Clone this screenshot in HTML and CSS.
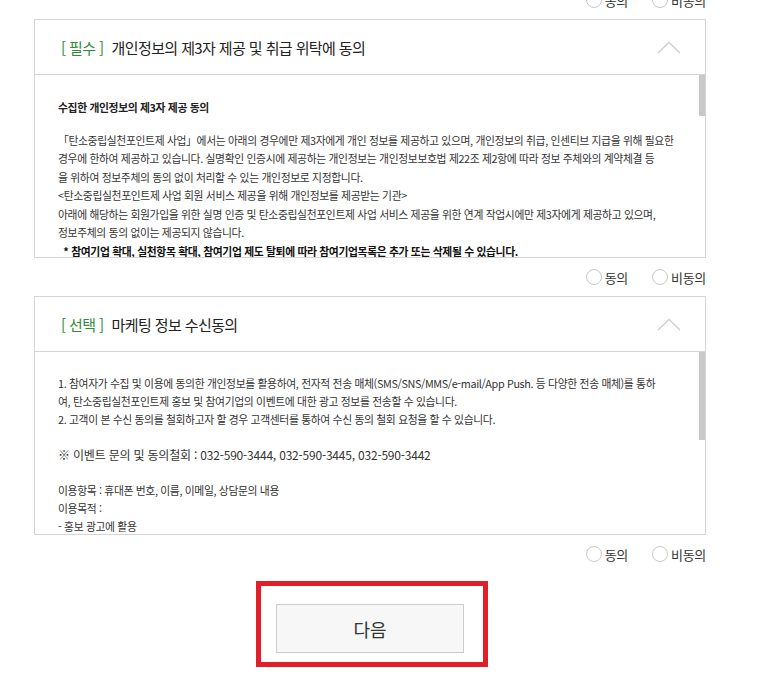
FILE: index.html
```html
<!DOCTYPE html>
<html lang="ko">
<head>
	<meta charset="utf-8">
	<title>약관 동의</title>
	<link rel="stylesheet" href="styles.css">
</head>
<body>
	<div id="agree-wrap">
		<div class="agree-radio">
			<label><span class="radio"></span>동의</label>
			<label><span class="radio"></span>비동의</label>
		</div>

		<div class="terms-box">
			<div class="terms-head">
				<p><span class="tag">[ 필수 ]</span>개인정보의 제3자 제공 및 취급 위탁에 동의</p>
				<svg class="toggle" width="24" height="13" viewBox="0 0 24 13"><polyline points="1,12 12,1.5 23,12" fill="none" stroke="#cfcfcf" stroke-width="1.4"/></svg>
			</div>
			<div class="terms-body">
				<div class="terms-text">
					<p class="terms-title">수집한 개인정보의 제3자 제공 동의</p>
					<p>
						「탄소중립실천포인트제 사업」에서는 아래의 경우에만 제3자에게 개인 정보를 제공하고 있으며, 개인정보의 취급, 인센티브 지급을 위해 필요한<br>
						경우에 한하여 제공하고 있습니다. 실명확인 인증시에 제공하는 개인정보는 개인정보보호법 제22조 제2항에 따라 정보 주체와의 계약체결 등<br>
						을 위하여 정보주체의 동의 없이 처리할 수 있는 개인정보로 지정합니다.<br>
						&lt;탄소중립실천포인트제 사업 회원 서비스 제공을 위해 개인정보를 제공받는 기관&gt;<br>
						아래에 해당하는 회원가입을 위한 실명 인증 및 탄소중립실천포인트제 사업 서비스 제공을 위한 연계 작업시에만 제3자에게 제공하고 있으며,<br>
						정보주체의 동의 없이는 제공되지 않습니다.
					</p>
					<p class="terms-note">&nbsp;&nbsp;* 참여기업 확대, 실천항목 확대, 참여기업 제도 탈퇴에 따라 참여기업목록은 추가 또는 삭제될 수 있습니다.</p>
					<p>
						1. 제공받는 자 : 한국환경공단, 참여기업<br>
						2. 제공 목적 : 회원 실명 인증, 실천 실적 확인 및 인센티브 지급
					</p>
				</div>
				<div class="scroll-bar"><span class="thumb thumb-long"></span></div>
			</div>
		</div>
		<div class="agree-radio">
			<label><span class="radio"></span>동의</label>
			<label><span class="radio"></span>비동의</label>
		</div>

		<div class="terms-box">
			<div class="terms-head">
				<p><span class="tag">[ 선택 ]</span>마케팅 정보 수신동의</p>
				<svg class="toggle" width="24" height="13" viewBox="0 0 24 13"><polyline points="1,12 12,1.5 23,12" fill="none" stroke="#cfcfcf" stroke-width="1.4"/></svg>
			</div>
			<div class="terms-body">
				<div class="terms-text marketing">
					<p>
						1. 참여자가 수집 및 이용에 동의한 개인정보를 활용하여, 전자적 전송 매체(SMS/SNS/MMS/e-mail/App Push. 등 다양한 전송 매체)를 통하<br>
						여, 탄소중립실천포인트제 홍보 및 참여기업의 이벤트에 대한 광고 정보를 전송할 수 있습니다.<br>
						2. 고객이 본 수신 동의를 철회하고자 할 경우 고객센터를 통하여 수신 동의 철회 요청을 할 수 있습니다.<br>
						<br>
						<span class="tel">※ 이벤트 문의 및 동의철회 : 032-590-3444, 032-590-3445, 032-590-3442</span><br>
						<br>
						이용항목 : 휴대폰 번호, 이름, 이메일, 상담문의 내용<br>
						이용목적 :<br>
						- 홍보 광고에 활용<br>
						- 이벤트 및 행사 안내<br>
						보유기간 : 동의 철회 시까지
					</p>
				</div>
				<div class="scroll-bar"><span class="thumb thumb-short"></span></div>
			</div>
		</div>
		<div class="agree-radio">
			<label><span class="radio"></span>동의</label>
			<label><span class="radio"></span>비동의</label>
		</div>

		<div class="btn-area">
			<div class="btn-mark">
				<button type="button" class="btn-next">다음</button>
			</div>
		</div>
	</div>
</body>
</html>
```

FILE: styles.css
```css
body {
	margin: 0;
	background: #fff;
	font-family: "Noto Sans CJK KR", "Noto Sans", sans-serif;
	color: #333;
	overflow: hidden;
}
#agree-wrap {
	width: 672px;
	margin: -19px 0 0 34px;
}
p {
	margin: 0;
}

/* 동의 / 비동의 */
.agree-radio {
	height: 38px;
	display: flex;
	justify-content: flex-end;
	align-items: center;
	gap: 24px;
}
.agree-radio label {
	display: flex;
	align-items: center;
	gap: 3px;
	font-size: 13px;
	color: #333;
	letter-spacing: -0.3px;
}
.agree-radio .radio {
	width: 14px;
	height: 14px;
	border: 1px solid #c9c9c9;
	border-radius: 50%;
	background: #fff;
}

/* 약관 박스 */
.terms-box {
	border: 1px solid #d5d5d5;
}
.terms-head {
	height: 54px;
	display: flex;
	align-items: center;
	justify-content: space-between;
	padding: 0 24px 0 26px;
	border-bottom: 1px solid #d5d5d5;
}
.terms-head p {
	font-size: 15px;
	color: #222;
	letter-spacing: -0.6px;
}
.terms-head .tag {
	color: #2f8a3c;
	margin-right: 8px;
}
.toggle {
	display: block;
	margin-top: 1px;
}
.terms-body {
	height: 182px;
	display: flex;
}
.terms-text {
	flex: 1;
	overflow: hidden;
	padding-left: 23px;
	font-size: 10.8px;
	line-height: 18.5px;
	letter-spacing: -0.35px;
	white-space: nowrap;
	color: #333;
}
.terms-text > p:first-child {
	margin-top: 23px;
}
.terms-text.marketing {
	line-height: 17.9px;
}
.terms-title {
	font-weight: bold;
	color: #222;
	margin-bottom: 14px;
}
.terms-note {
	font-weight: bold;
	color: #111;
}
.terms-text .tel {
	font-size: 12px;
	line-height: 1;
	letter-spacing: -0.2px;
}

/* 스크롤바 */
.scroll-bar {
	width: 6px;
	background: #fff;
}
.scroll-bar .thumb {
	display: block;
	background: #c8c8c8;
}
.thumb-long {
	height: 41px;
}
.thumb-short {
	height: 88px;
}

/* 버튼 */
.btn-area {
	display: flex;
	justify-content: center;
	padding-top: 8px;
}
.btn-mark {
	border: 5px solid #e21f26;
	padding: 18px 19px 9px 15px;
	margin-left: 4px;
}
.btn-next {
	display: block;
	width: 188px;
	height: 49px;
	border: 1px solid #cccccc;
	background: #f7f7f7;
	font-family: "Noto Sans CJK KR", sans-serif;
	font-size: 18px;
	color: #333;
	padding: 0;
}
```
